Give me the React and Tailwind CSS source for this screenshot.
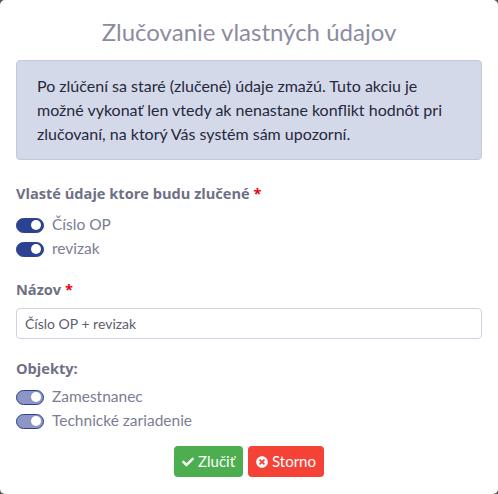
import { FaCheck, FaTimesCircle } from "react-icons/fa";

function Toggle({ label, muted }) {
  return (
    <label className="flex items-center h-6 gap-2">
      <span
        className={
          muted
            ? "relative w-7 h-[15px] rounded-full border border-[#2b4191] bg-[#8c95c6]"
            : "relative w-7 h-[15px] rounded-full border border-[#2b4191] bg-[#2b4191]"
        }
      >
        <span className="absolute right-[2px] top-[1.5px] w-[10px] h-[10px] rounded-full bg-white" />
      </span>
      <span className="text-[15.5px] text-[#7b7d94]">{label}</span>
    </label>
  );
}

export default function App() {
  return (
    <div className="w-[498px] h-[494px] bg-[#555] font-['Lato',sans-serif]">
      <div className="w-full h-full bg-white rounded-[5px] px-4 pt-[14px]">
        <h2 className="text-center text-[24px] leading-[36px] text-[#8c8ca0]">Zlučovanie vlastných údajov</h2>

        <div className="mt-[10px] rounded border border-[#c3c8dd] bg-[#d4d9e9] px-5 py-[13px] text-[16px] leading-[24px] text-[#25283d]">
          Po zlúčení sa staré (zlučené) údaje zmažú. Tuto akciu je možné vykonať len vtedy ak nenastane konflikt hodnôt pri zlučovaní, na ktorý Vás systém sám upozorní.
        </div>

        <div className="mt-[22px] text-[14.6px] leading-[22px] font-bold text-[#6f7085] font-['Open_Sans',sans-serif]">
          Vlasté údaje ktore budu zlučené <span className="text-red-600">*</span>
        </div>
        <div className="mt-[9px]">
          <Toggle label="Číslo OP" />
          <Toggle label="revizak" />
        </div>

        <div className="mt-[17px] text-[14.6px] leading-[22px] font-bold text-[#6f7085] font-['Open_Sans',sans-serif]">
          Názov <span className="text-red-600">*</span>
        </div>
        <input
          className="mt-[8px] w-full h-[31px] rounded border border-[#d3d0e3] px-2 text-[14px] text-[#5c5e72] outline-none"
          defaultValue="Číslo OP + revizak"
        />

        <div className="mt-[18px] text-[14.6px] leading-[22px] font-bold text-[#6f7085] font-['Open_Sans',sans-serif]">Objekty:</div>
        <div className="mt-[6px]">
          <Toggle label="Zamestnanec" muted />
          <Toggle label="Technické zariadenie" muted />
        </div>

        <div className="mt-[13px] flex justify-center gap-[5px]">
          <button className="h-[31px] px-[8px] flex items-center gap-1 rounded bg-[#4cae4f] text-white text-[15px]">
            <FaCheck className="w-[12px] h-[12px]" /> Zlučiť
          </button>
          <button className="h-[31px] px-[8px] flex items-center gap-1 rounded bg-[#f44336] text-white text-[15px]">
            <FaTimesCircle className="w-[12px] h-[12px]" /> Storno
          </button>
        </div>
      </div>
    </div>
  );
}
